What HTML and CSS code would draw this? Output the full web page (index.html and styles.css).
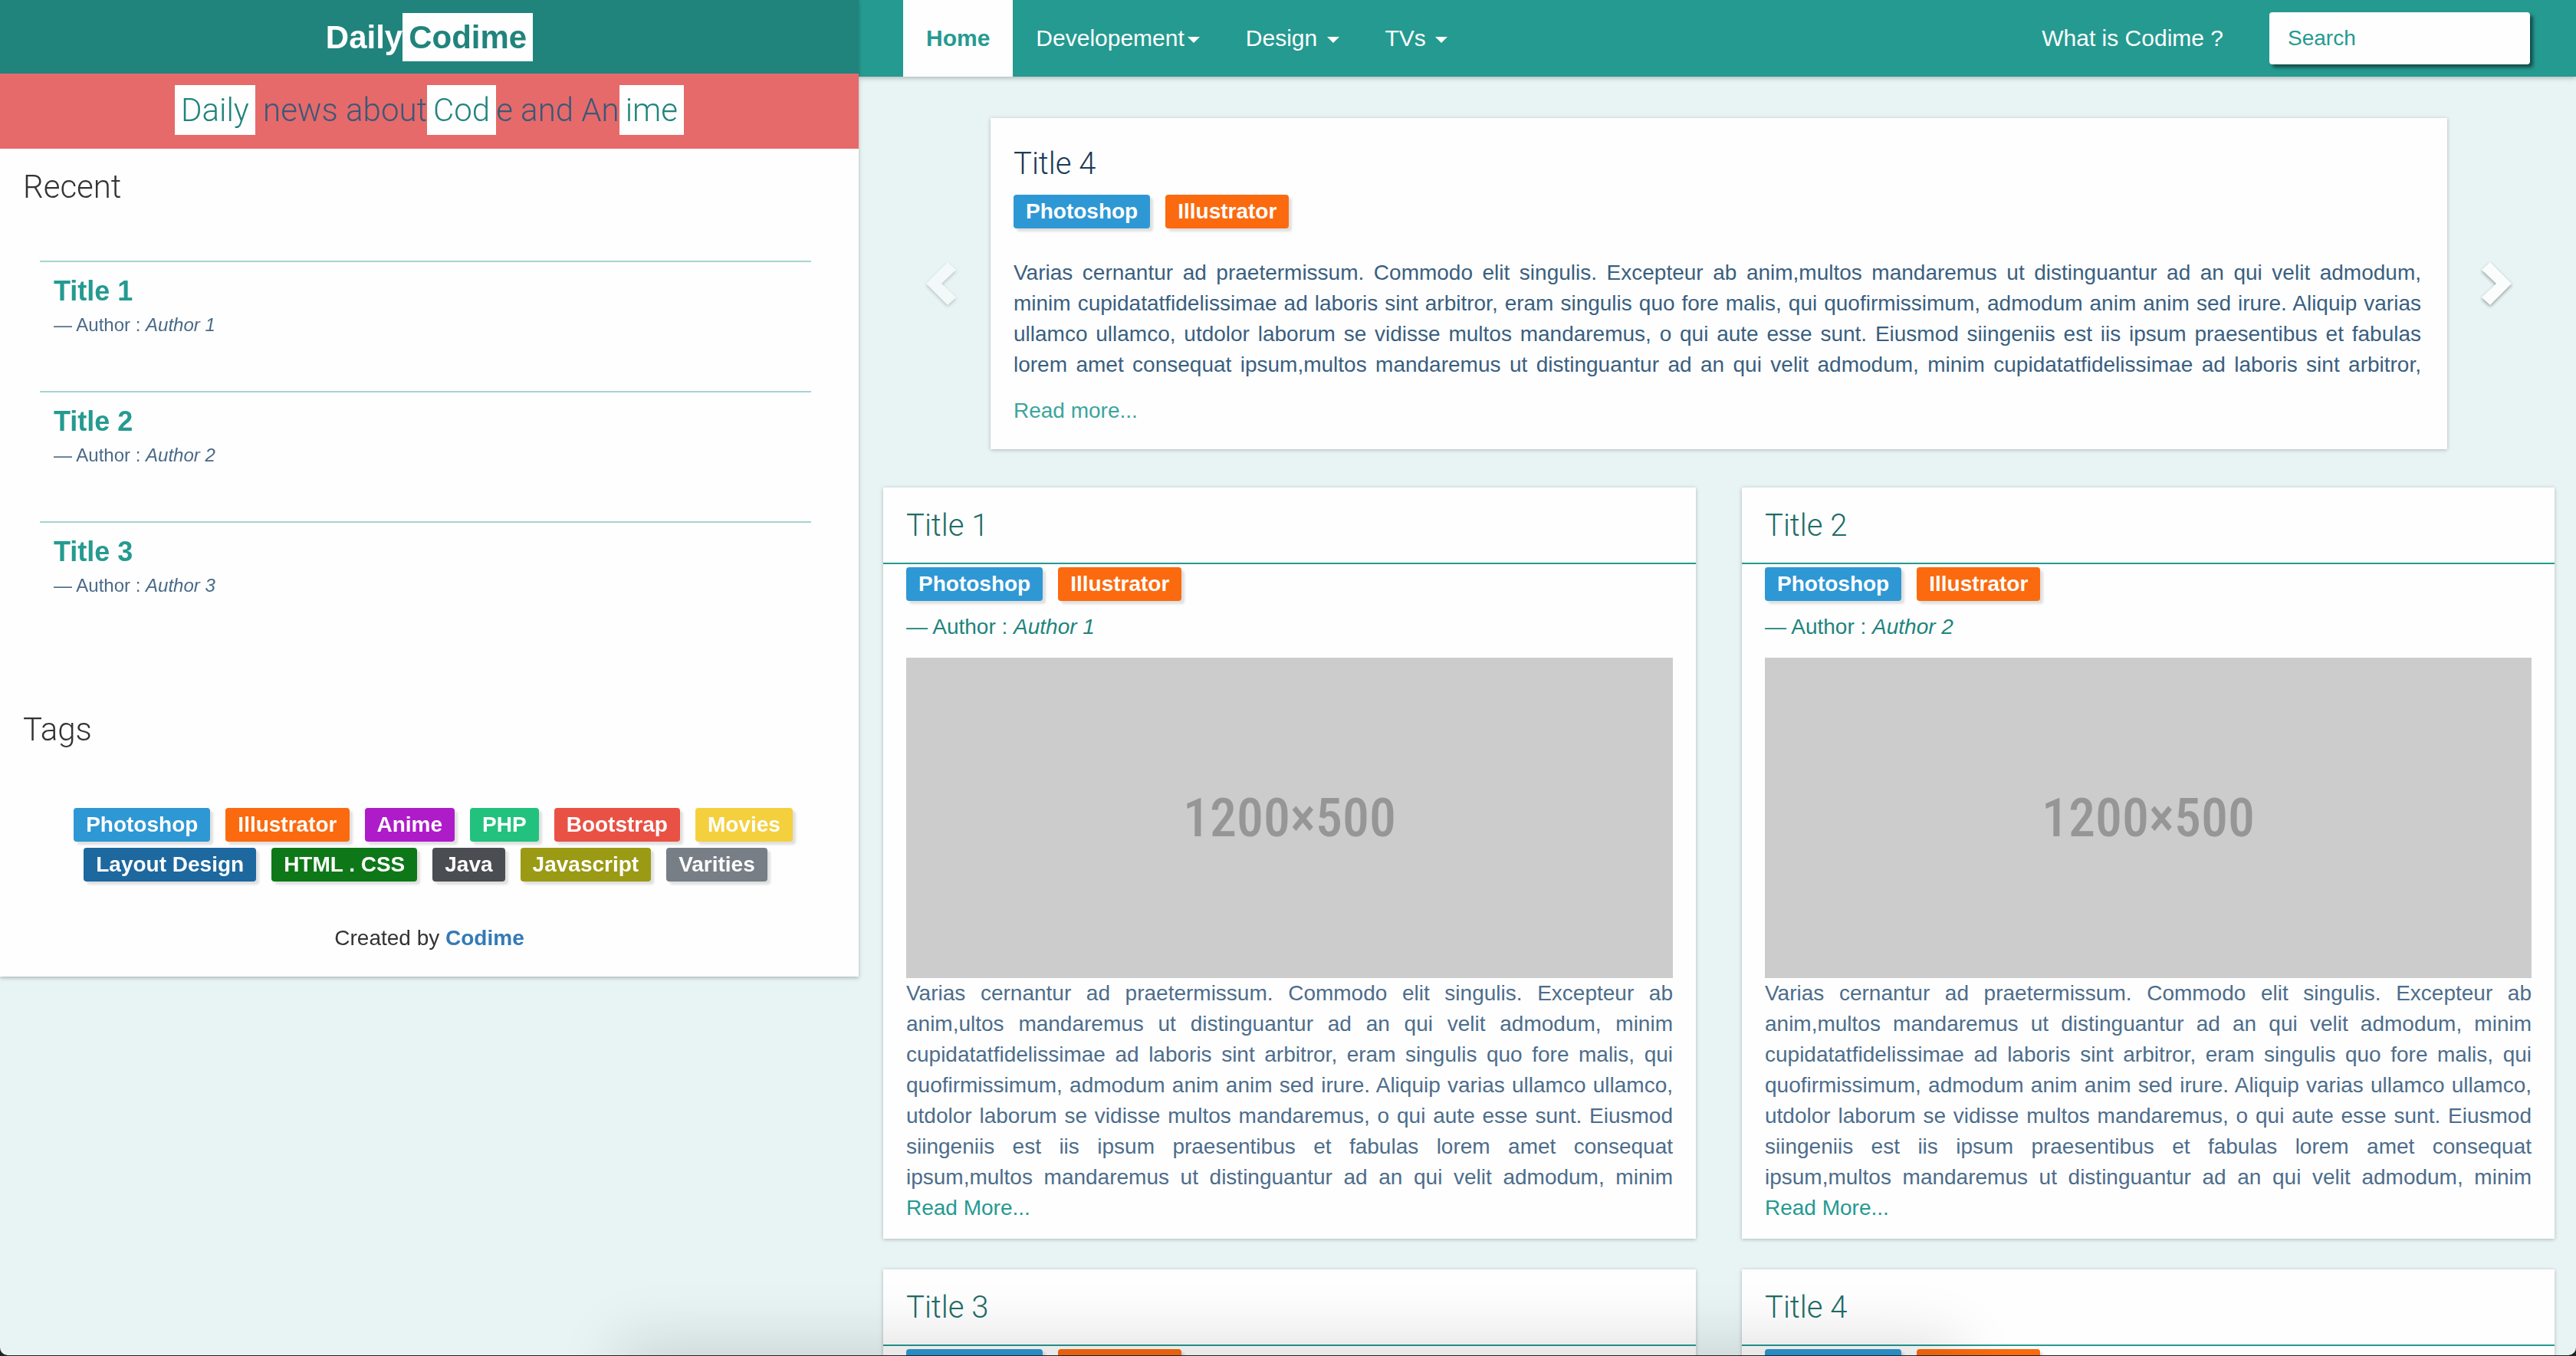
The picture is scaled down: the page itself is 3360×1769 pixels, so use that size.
FILE: index.html
```html
<!DOCTYPE html>
<html lang="en">
<head>
<meta charset="utf-8">
<meta name="viewport" content="width=device-width, initial-scale=1">
<title>Daily Codime</title>
<link rel="stylesheet" href="styles.css">
</head>
<body>
<div class="layout">
  <aside class="sidebar">
    <h1 class="brand">Daily<span class="mark">Codime</span></h1>
    <p class="tagline"><span class="mark">Daily</span> news about<span class="mark">Cod</span>e and An<span class="mark">ime</span></p>

    <section class="side-section">
      <h2 class="side-title">Recent</h2>
      <ul class="recent">
        <li><a class="recent-link" href="#">Title 1</a><p class="recent-author">— Author : <cite>Author 1</cite></p></li>
        <li><a class="recent-link" href="#">Title 2</a><p class="recent-author">— Author : <cite>Author 2</cite></p></li>
        <li><a class="recent-link" href="#">Title 3</a><p class="recent-author">— Author : <cite>Author 3</cite></p></li>
      </ul>
    </section>

    <section class="side-section side-tags">
      <h2 class="side-title">Tags</h2>
      <ul class="tag-cloud">
        <li><a class="label photoshop" href="#">Photoshop</a></li>
        <li><a class="label illustrator" href="#">Illustrator</a></li>
        <li><a class="label anime" href="#">Anime</a></li>
        <li><a class="label php" href="#">PHP</a></li>
        <li><a class="label bootstrap" href="#">Bootstrap</a></li>
        <li><a class="label movies" href="#">Movies</a></li>
        <li><a class="label layout-design" href="#">Layout Design</a></li>
        <li><a class="label html-css" href="#">HTML . CSS</a></li>
        <li><a class="label java" href="#">Java</a></li>
        <li><a class="label javascript" href="#">Javascript</a></li>
        <li><a class="label varities" href="#">Varities</a></li>
      </ul>
    </section>

    <p class="credit">Created by <a href="#">Codime</a></p>
  </aside>

  <main class="main">
    <nav class="navbar">
      <ul class="menu">
        <li><a class="menu-link active" href="#">Home</a></li>
        <li><button class="menu-link" type="button">Developement<span class="caret"></span></button></li>
        <li><button class="menu-link" type="button">Design <span class="caret"></span></button></li>
        <li><button class="menu-link" type="button">TVs <span class="caret"></span></button></li>
      </ul>
      <a class="menu-link about" href="#">What is Codime ?</a>
      <input class="search" type="search" placeholder="Search" aria-label="Search">
    </nav>

    <section class="carousel">
      <button class="arrow prev" type="button" aria-label="Previous">
        <svg width="40" height="56" viewBox="0 0 40 56"><path d="M28 0 39 10 20 28 39 46 28 56 0 28z"/></svg>
      </button>
      <article class="slide">
        <h2 class="slide-title">Title 4</h2>
        <div class="labels"><a class="label photoshop" href="#">Photoshop</a><a class="label illustrator" href="#">Illustrator</a></div>
        <p class="slide-text">Varias cernantur ad praetermissum. Commodo elit singulis. Excepteur ab anim,multos mandaremus ut distinguantur ad an qui velit admodum, minim cupidatatfidelissimae ad laboris sint arbitror, eram singulis quo fore malis, qui quofirmissimum, admodum anim anim sed irure. Aliquip varias ullamco ullamco, utdolor laborum se vidisse multos mandaremus, o qui aute esse sunt. Eiusmod siingeniis est iis ipsum praesentibus et fabulas lorem amet consequat ipsum,multos mandaremus ut distinguantur ad an qui velit admodum, minim cupidatatfidelissimae ad laboris sint arbitror,</p>
        <a class="slide-more" href="#">Read more...</a>
      </article>
      <button class="arrow next" type="button" aria-label="Next">
        <svg width="40" height="56" viewBox="0 0 40 56"><path d="M12 0 1 10 20 28 1 46 12 56 40 28z"/></svg>
      </button>
    </section>

    <section class="posts">
      <article class="post">
        <h2 class="post-title">Title 1</h2>
        <div class="post-body">
          <div class="labels"><a class="label photoshop" href="#">Photoshop</a><a class="label illustrator" href="#">Illustrator</a></div>
          <p class="post-author">— Author : <cite>Author 1</cite></p>
          <div class="thumb">1200×500</div>
          <p class="post-text">Varias cernantur ad praetermissum. Commodo elit singulis. Excepteur ab anim,ultos mandaremus ut distinguantur ad an qui velit admodum, minim cupidatatfidelissimae ad laboris sint arbitror, eram singulis quo fore malis, qui quofirmissimum, admodum anim anim sed irure. Aliquip varias ullamco ullamco, utdolor laborum se vidisse multos mandaremus, o qui aute esse sunt. Eiusmod siingeniis est iis ipsum praesentibus et fabulas lorem amet consequat ipsum,multos mandaremus ut distinguantur ad an qui velit admodum, minim</p>
          <a class="post-more" href="#">Read More...</a>
        </div>
      </article>
      <article class="post">
        <h2 class="post-title">Title 2</h2>
        <div class="post-body">
          <div class="labels"><a class="label photoshop" href="#">Photoshop</a><a class="label illustrator" href="#">Illustrator</a></div>
          <p class="post-author">— Author : <cite>Author 2</cite></p>
          <div class="thumb">1200×500</div>
          <p class="post-text">Varias cernantur ad praetermissum. Commodo elit singulis. Excepteur ab anim,multos mandaremus ut distinguantur ad an qui velit admodum, minim cupidatatfidelissimae ad laboris sint arbitror, eram singulis quo fore malis, qui quofirmissimum, admodum anim anim sed irure. Aliquip varias ullamco ullamco, utdolor laborum se vidisse multos mandaremus, o qui aute esse sunt. Eiusmod siingeniis est iis ipsum praesentibus et fabulas lorem amet consequat ipsum,multos mandaremus ut distinguantur ad an qui velit admodum, minim</p>
          <a class="post-more" href="#">Read More...</a>
        </div>
      </article>
      <article class="post">
        <h2 class="post-title">Title 3</h2>
        <div class="post-body">
          <div class="labels"><a class="label photoshop" href="#">Photoshop</a><a class="label illustrator" href="#">Illustrator</a></div>
        </div>
      </article>
      <article class="post">
        <h2 class="post-title">Title 4</h2>
        <div class="post-body">
          <div class="labels"><a class="label photoshop" href="#">Photoshop</a><a class="label illustrator" href="#">Illustrator</a></div>
        </div>
      </article>
    </section>
  </main>
</div>
<div class="bottom-shade"></div>
<div class="screen-edge"></div>
</body>
</html>
```
FILE: styles.css
```css
* { box-sizing: border-box; }

body {
  margin: 0;
  height: 100vh;
  overflow: hidden;
  background: #e8f4f4;
  color: #333;
  font: 28px/40px "Liberation Sans", Arial, sans-serif;
}

h1, h2, p, ul { margin: 0; padding: 0; }
ul { list-style: none; }
a { text-decoration: none; }
button { border: 0; padding: 0; background: none; font: inherit; cursor: pointer; }

.layout {
  display: grid;
  grid-template-columns: 1fr 2fr;
  align-items: start;
  height: 100%;
  overflow-y: auto;
  scrollbar-width: none;
}

/* Sidebar */
.sidebar {
  position: relative;
  z-index: 1;
  background: #fefefe;
  box-shadow: 0 2px 5px rgba(0, 0, 0, .25);
  padding-bottom: 30px;
}
.brand {
  padding: 16px 0 14px;
  background: #20847c;
  color: #fefefe;
  font-size: 42px;
  line-height: 66px;
  text-align: center;
}
.mark {
  padding: 8px;
  background: #fefefe;
  color: #20847c;
}
.tagline {
  padding: 16px 0 18px;
  background: #e66a6a;
  color: #3a5878;
  font: 300 42px/64px Roboto, sans-serif;
  text-align: center;
}
.side-section { padding-top: 26px; }
.side-tags { padding-top: 78px; }
.side-title {
  padding: 0 30px;
  font: 300 42px/48px Roboto, sans-serif;
}
.recent { margin: 72px 62px 0 52px; }
.recent li {
  border-top: 2px solid #a3d5d1;
  padding: 18px 18px 66px;
}
.recent-link {
  display: block;
  color: #259a91;
  font-size: 36px;
  font-weight: bold;
}
.recent-author {
  margin-top: 4px;
  color: #4a6a88;
  font-size: 24px;
}
.tag-cloud {
  display: flex;
  flex-wrap: wrap;
  justify-content: center;
  gap: 8px 20px;
  margin: 78px 62px 0 52px;
}
.tag-cloud li:first-child { margin-left: 20px; }
.credit { margin-top: 54px; text-align: center; }
.credit a { color: #337ab7; font-weight: bold; }

/* Labels */
.label {
  display: block;
  padding: 0 16px;
  border-radius: 4px;
  box-shadow: 4px 4px 3px rgba(0, 0, 0, .12);
  color: #fefefe;
  font-weight: bold;
  line-height: 44px;
}
.labels { display: flex; gap: 20px; }
.photoshop { background: #2e98d5; }
.illustrator { background: #fb6a0f; }
.anime { background: #ae1cca; }
.php { background: #22c27e; }
.bootstrap { background: #e95145; }
.movies { background: #f4d03e; }
.layout-design { background: #1d689f; }
.html-css { background: #0e7818; }
.java { background: #4a4d52; }
.javascript { background: #9b9a15; }
.varities { background: #777e85; }

/* Navigation bar */
.navbar {
  display: flex;
  align-items: center;
  padding: 0 60px 0 58px;
  background: #259a91;
  box-shadow: 0 2px 6px rgba(0, 0, 0, .25);
}
.menu { display: flex; flex: 1; }
.menu-link {
  display: block;
  padding: 0 30px;
  color: #fefefe;
  font-size: 30px;
  line-height: 100px;
}
.menu-link.active {
  background: #fefefe;
  color: #259a91;
  font-weight: bold;
}
.caret {
  display: inline-block;
  margin-left: 4px;
  border-top: 8px solid;
  border-right: 8px solid transparent;
  border-left: 8px solid transparent;
  vertical-align: middle;
}
.about { margin-right: 30px; }
.search {
  width: 340px;
  height: 68px;
  padding: 0 24px;
  border: 0;
  border-radius: 4px;
  background: #fefefe;
  box-shadow: 4px 4px 4px rgba(0, 0, 0, .5);
  color: #259a91;
  font: inherit;
}
.search::placeholder { color: #259a91; opacity: 1; }

/* Carousel */
.carousel { display: flex; margin-top: 54px; }
.arrow {
  display: flex;
  align-items: center;
  justify-content: center;
  width: 172px;
}
.arrow svg {
  fill: #fefefe;
  filter: drop-shadow(0 2px 2px rgba(0, 0, 0, .4));
  overflow: visible;
}
.prev { padding-left: 44px; opacity: .5; }
.next { width: 168px; padding-right: 40px; opacity: .9; }
.slide {
  flex: 1;
  padding: 36px 34px 30px 30px;
  background: #fefefe;
  box-shadow: 0 1px 5px rgba(0, 0, 0, .25);
}
.slide-title {
  margin-bottom: 16px;
  color: #1b3a57;
  font: 300 40px/48px Roboto, sans-serif;
}
.slide-text {
  margin: 38px 0 20px;
  color: #3a5f80;
  text-align: justify;
  text-align-last: justify;
}
.slide-more { display: block; color: #3ba59d; }

/* Posts */
.posts {
  display: grid;
  grid-template-columns: 1fr 1fr;
  gap: 40px 60px;
  padding: 50px 28px 40px 32px;
}
.post {
  background: #fefefe;
  box-shadow: 0 1px 5px rgba(0, 0, 0, .25);
}
.post-title {
  padding: 26px 30px 24px;
  border-bottom: 2px solid #259a91;
  color: #1f6c67;
  font: 300 40px/48px Roboto, sans-serif;
}
.post-body { padding: 4px 30px 20px; }
.post-author { margin: 14px 0 20px; color: #20847c; }
.thumb {
  display: flex;
  align-items: center;
  justify-content: center;
  aspect-ratio: 1000 / 418;
  background: #ccc;
  color: #969696;
  font: 500 70px/80px "Roboto Condensed", Roboto, sans-serif;
}
.post-text {
  color: #4d6d8b;
  text-align: justify;
  text-align-last: justify;
}
.post-more { display: block; color: #259a91; }

/* Screen bottom: soft shade and rounded dark edge */
.bottom-shade {
  position: fixed;
  right: 24%;
  bottom: -100px;
  left: 24%;
  height: 100px;
  box-shadow: 0 -20px 80px rgba(0, 0, 0, .13);
  pointer-events: none;
}
.screen-edge {
  position: fixed;
  inset: -20px 0 1px;
  border-radius: 0 0 10px 10px;
  box-shadow: 0 0 0 10px #222;
  pointer-events: none;
}
```
